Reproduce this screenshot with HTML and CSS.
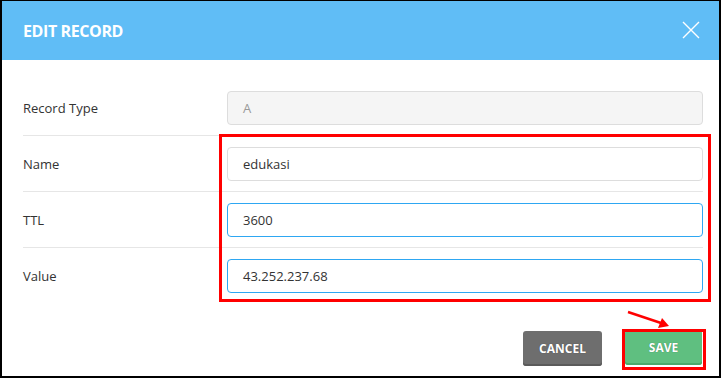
FILE: index.html
```html
<!DOCTYPE html>
<html lang="en">
<head>
    <meta charset="UTF-8">
    <title>Edit Record</title>
    <link rel="stylesheet" href="styles.css">
</head>
<body>
    <div class="modal">
        <div class="modal-header">
            <h1>EDIT RECORD</h1>
            <svg class="close" width="18" height="18" viewBox="0 0 18 18"><path d="M1 1L17 17M17 1L1 17" stroke="#fff" stroke-width="1.4" fill="none"/></svg>
        </div>
        <div class="modal-body">
            <div class="row">
                <label>Record Type</label>
                <div class="input disabled">A</div>
            </div>
            <div class="row">
                <label>Name</label>
                <div class="input">edukasi</div>
            </div>
            <div class="row">
                <label>TTL</label>
                <div class="input focus">3600</div>
            </div>
            <div class="row">
                <label>Value</label>
                <div class="input focus">43.252.237.68</div>
            </div>
        </div>
        <div class="modal-footer">
            <button class="btn btn-cancel">CANCEL</button>
            <button class="btn btn-save">SAVE</button>
        </div>

        <!-- annotations -->
        <div class="mark mark-fields"></div>
        <div class="mark mark-save"></div>
        <svg class="arrow" width="50" height="24" viewBox="0 0 50 24"><path d="M2 3L38 15" stroke="#f00" stroke-width="2.5" fill="none"/><path d="M43 17L32 19L36 9Z" fill="#f00"/></svg>
    </div>
</body>
</html>
```

FILE: styles.css
```css
* { box-sizing: border-box; }
body { margin: 0; font-family: 'Open Sans', sans-serif; color: #333; background: #fff; }
.modal {
    position: relative;
    width: 721px;
    height: 378px;
    border: 2px solid #000;
    border-top-width: 1px;
    background: #fff;
}
.modal-header {
    height: 59px;
    background-color: #60bdf6;
    display: flex;
    align-items: center;
    justify-content: space-between;
    padding: 0 19px 0 21px;
}
.modal-header h1 { margin: 0; color: #fff; font-size: 16px; font-weight: 700; letter-spacing: -0.4px; }
.close { margin-top: -1px; }
.modal-body { padding: 20px 16px 0 21px; }
.row {
    display: grid;
    grid-template-columns: 204px 1fr;
    align-items: center;
    height: 56px;
    border-bottom: 1px solid #e6e6e6;
}
.row:last-child { border-bottom: none; height: 55px; }
.row label { font-size: 13px; color: #333; }
.input {
    height: 34px;
    border: 1px solid #ddd;
    border-radius: 4px;
    padding: 0 15px;
    font-size: 13px;
    line-height: 32px;
    color: #333;
    background: #fff;
}
.input.disabled { background: #f5f5f5; color: #999; }
.input.focus { border-color: #2ea7f2; }
.modal-footer {
    display: flex;
    justify-content: flex-end;
    gap: 23px;
    padding: 28px 17px 0 0;
}
.btn {
    height: 35px;
    border: none;
    border-radius: 3px;
    color: #fff;
    font-family: 'Open Sans', sans-serif;
    font-size: 12px;
    font-weight: 700;
    text-shadow: 0 0 1px rgba(0, 0, 0, 0.4);
}
.btn-cancel { width: 79px; background: #6e6e6e; box-shadow: inset 0 -2px 0 #5a5a5a; }
.btn-save { width: 77px; background: #5fbf80; box-shadow: inset 0 -2px 0 #4ba86b; margin-top: -1px; }
.mark { position: absolute; border: 3px solid #f00; }
.mark-fields { left: 217px; top: 133px; width: 492px; height: 168px; }
.mark-save { left: 620px; top: 328px; width: 84px; height: 41px; }
.arrow { position: absolute; left: 624px; top: 308px; }
```
